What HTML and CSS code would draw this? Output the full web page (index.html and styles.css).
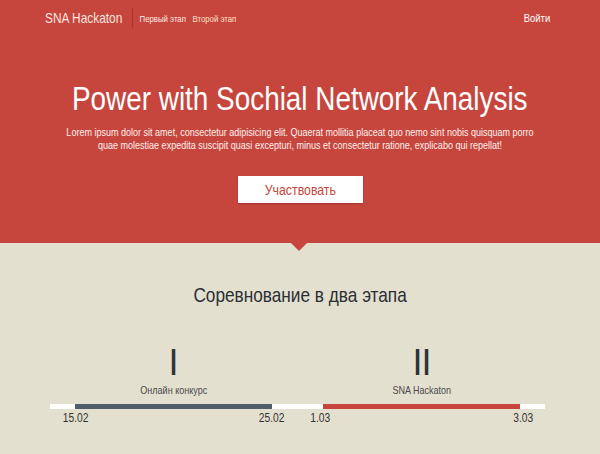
FILE: index.html
```html
<!DOCTYPE html>
<html lang="ru">
<head>
<meta charset="utf-8">
<title>SNA Hackaton</title>
<link rel="stylesheet" href="styles.css">
</head>
<body>
<header class="hero">
  <nav class="nav">
    <div class="nav-left cond-left">
      <a class="brand" href="#">SNA Hackaton</a>
      <span class="sep"></span>
      <a class="nav-link first" href="#">Первый этап</a>
      <a class="nav-link second" href="#">Второй этап</a>
    </div>
    <a class="login cond-right" href="#">Войти</a>
  </nav>
  <div class="hero-body">
    <h1 class="title cond">Power with Sochial Network Analysis</h1>
    <p class="lead cond">Lorem ipsum dolor sit amet, consectetur adipisicing elit. Quaerat mollitia placeat quo nemo sint nobis quisquam porro quae molestiae expedita suscipit quasi excepturi, minus et consectetur ratione, explicabo qui repellat!</p>
    <a class="btn" href="#"><span class="cond">Участвовать</span></a>
  </div>
  <span class="pointer"></span>
</header>
<section class="stages">
  <h2 class="stages-title"><span class="cond">Соревнование в два этапа</span></h2>
  <div class="timeline">
    <div class="numeral n1">I</div>
    <div class="numeral n2">II</div>
    <div class="label n1"><span class="cond">Онлайн конкурс</span></div>
    <div class="label n2"><span class="cond">SNA Hackaton</span></div>
    <div class="line"></div>
    <div class="bar bar-dark n1"></div>
    <div class="bar bar-red n2"></div>
    <div class="dates n1"><span class="cond">15.02</span><span class="cond">25.02</span></div>
    <div class="dates n2"><span class="cond">1.03</span><span class="cond">3.03</span></div>
  </div>
</section>
</body>
</html>
```
FILE: styles.css
```css
* { box-sizing: border-box; }
html, body { margin: 0; padding: 0; }
body {
  background: #e4e0d0;
  font-family: "Liberation Sans", Arial, sans-serif;
  color: #333;
  width: 600px;
  height: 454px;
  overflow: hidden;
}
a { text-decoration: none; }

/* the reference renders its text horizontally condensed */
.cond, .cond-left, .cond-right {
  display: inline-block;
  transform: scaleX(0.82);
}
.cond { transform-origin: 50% 50%; }
.cond-left { transform-origin: 0 50%; }
.cond-right { transform-origin: 100% 50%; }

.hero {
  position: relative;
  background: #c6463e;
  height: 243px;
  color: #fff;
}
.nav {
  display: flex;
  align-items: center;
  justify-content: space-between;
  height: 36px;
  padding: 0 50px 0 45px;
}
.nav-left {
  display: flex;
  align-items: center;
}
.brand {
  color: #f6e4df;
  font-size: 14.5px;
}
.sep {
  width: 1px;
  height: 20px;
  background: #9e332d;
  margin: 0 8px 0 12px;
}
.nav-link {
  font-size: 9.5px;
  margin-right: 8px;
}
.nav-link.first { color: #fbe9e2; }
.nav-link.second { color: #fbe1c8; }
.login {
  color: #fff;
  font-size: 11.5px;
}

.hero-body {
  display: flex;
  flex-direction: column;
  align-items: center;
  text-align: center;
  padding-top: 43px;
}
.title {
  display: block;
  margin: 0;
  font-size: 34px;
  line-height: 39px;
  font-weight: normal;
  color: #fff;
  white-space: nowrap;
}
.lead {
  display: block;
  margin: 8px 0 0;
  width: 580px;
  font-size: 11px;
  line-height: 13px;
  color: #fdf0ec;
}
.btn {
  margin-top: 24px;
  width: 125px;
  height: 27px;
  display: flex;
  align-items: center;
  justify-content: center;
  background: #fff;
  color: #c6463e;
  font-size: 15px;
  box-shadow: 0 1px 2px rgba(0,0,0,0.2);
}
.pointer {
  position: absolute;
  left: 291px;
  top: 100%;
  width: 0;
  height: 0;
  border-left: 8px solid transparent;
  border-right: 8px solid transparent;
  border-top: 8px solid #c6463e;
}

.stages {
  padding-top: 40px;
}
.stages-title {
  margin: 0;
  text-align: center;
  font-size: 21px;
  line-height: 24px;
  font-weight: normal;
  color: #2b2f33;
}
.timeline {
  display: grid;
  grid-template-columns: 25px 197px 51px 197px 25px;
  margin: 38px 0 0 50px;
  width: 495px;
}
.n1 { grid-column: 2; }
.n2 { grid-column: 4; }
.numeral {
  grid-row: 1;
  text-align: center;
  font-size: 36px;
  line-height: 36px;
  color: #2d3338;
}
.numeral.n2 { letter-spacing: -1px; }
.label {
  grid-row: 2;
  margin-top: 2.5px;
  text-align: center;
  font-size: 11px;
  line-height: 13px;
  color: #4a4a4a;
}
.line {
  grid-row: 3;
  grid-column: 1 / -1;
  margin-top: 7.5px;
  height: 5px;
  background: #fff;
}
.bar {
  grid-row: 3;
  margin-top: 7.5px;
  height: 5px;
}
.bar-dark { background: #505e6b; }
.bar-red { background: #c8453c; }
.dates {
  grid-row: 4;
  margin: 1.5px -15.5px 0;
  display: flex;
  justify-content: space-between;
  font-size: 12.5px;
  line-height: 15px;
  color: #333;
}
```
